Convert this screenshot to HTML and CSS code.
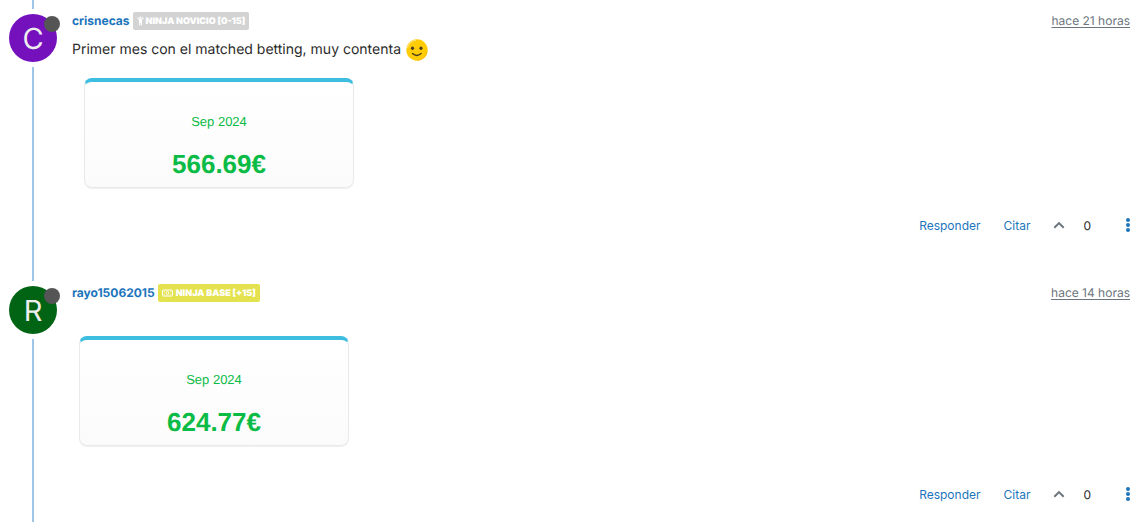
FILE: index.html
```html
<!DOCTYPE html>
<html lang="es">
<head>
<meta charset="utf-8">
<title>Comentarios</title>
<link rel="stylesheet" href="styles.css">
</head>
<body>
<main class="thread">
  <article class="post">
    <div class="rail"><div class="avatar avatar-purple">C<span class="status"></span></div></div>
    <div class="body">
      <header class="head">
        <a class="name" href="#">crisnecas</a>
        <span class="badge badge-gray">
          <svg width="7" height="10" viewBox="0 0 7 10" fill="none" stroke="currentColor" stroke-width="1.1" stroke-linecap="round"><circle cx="3.500" cy="1.600" r="1.100" fill="currentColor" stroke="none"/><path d="M.8 1.800 2.400 3.600h2.200L6.200 1.800M2.600 4v5M4.400 4v5M3.500 4v2.500"/></svg>
          NINJA NOVICIO [0-15]
        </span>
        <a class="time" href="#">hace 21 horas</a>
      </header>
      <p class="text">Primer mes con el matched betting, muy contenta
        <svg class="emoji" width="22" height="22" viewBox="0 0 22 22" role="img" aria-label="sonrisa"><circle cx="11" cy="11" r="10.700" fill="#ffcc05"/><path d="M1.300 9A10 10 0 0 1 10 1.200" fill="none" stroke="#ffe270" stroke-width="1.200"/><path d="M21 13A10.200 10.200 0 0 1 11 21.200" fill="none" stroke="#f6b900" stroke-width="1"/><ellipse cx="6.500" cy="9.300" rx="1.600" ry="1.800" fill="#493c20"/><ellipse cx="15" cy="9.300" rx="1.600" ry="1.800" fill="#493c20"/><path d="M6.500 14.500q4.300 3.800 8.600 0" fill="none" stroke="#493c20" stroke-width="1.400" stroke-linecap="round"/></svg>
      </p>
      <section class="card card-inset">
        <div class="month">Sep 2024</div>
        <div class="amount">566.69€</div>
      </section>
      <footer class="actions">
        <button class="link">Responder</button>
        <button class="link">Citar</button>
        <button class="icon vote" aria-label="Votar"><svg width="12" height="8" viewBox="0 0 12 8" fill="none" stroke="currentColor" stroke-width="2"><path d="M1.300 6.800 6 2.100l4.700 4.700"/></svg></button>
        <span class="count">0</span>
        <button class="icon more" aria-label="Más opciones"><svg width="4" height="14" viewBox="0 0 4 14" fill="currentColor"><circle cx="2" cy="2" r="2"/><circle cx="2" cy="7" r="2"/><circle cx="2" cy="12" r="2"/></svg></button>
      </footer>
    </div>
  </article>
  <article class="post">
    <div class="rail"><div class="avatar avatar-green">R<span class="status"></span></div></div>
    <div class="body">
      <header class="head">
        <a class="name" href="#">rayo15062015</a>
        <span class="badge badge-yellow">
          <svg width="11" height="8" viewBox="0 0 11 8" fill="none" stroke="currentColor"><rect x=".5" y="1" width="10" height="6" rx=".6"/><path d="M2 3.300v-.8h1M8 2.500h1v.8M2 4.700v.8h1M8 5.500h1v-.8" stroke-width=".6"/><ellipse cx="5.500" cy="4" rx="1.300" ry="1.600" stroke-width=".9"/></svg>
          NINJA BASE [+15]
        </span>
        <a class="time" href="#">hace 14 horas</a>
      </header>
      <section class="card card-alone">
        <div class="month">Sep 2024</div>
        <div class="amount">624.77€</div>
      </section>
      <footer class="actions">
        <button class="link">Responder</button>
        <button class="link">Citar</button>
        <button class="icon vote" aria-label="Votar"><svg width="12" height="8" viewBox="0 0 12 8" fill="none" stroke="currentColor" stroke-width="2"><path d="M1.300 6.800 6 2.100l4.700 4.700"/></svg></button>
        <span class="count">0</span>
        <button class="icon more" aria-label="Más opciones"><svg width="4" height="14" viewBox="0 0 4 14" fill="currentColor"><circle cx="2" cy="2" r="2"/><circle cx="2" cy="7" r="2"/><circle cx="2" cy="12" r="2"/></svg></button>
      </footer>
    </div>
  </article>
</main>
</body>
</html>
```
FILE: styles.css
```css
* { box-sizing: border-box; }
body { margin: 0; background: #fff; color: #2b2b2b; font-family: Inter, "Liberation Sans", sans-serif; font-size: 14px; text-rendering: geometricPrecision; }
.thread::before { content: ""; display: block; width: 2px; height: 9px; margin-left: 32px; background: #9dc6e8; }
.post { display: grid; grid-template-columns: 48px 1fr; gap: 15px; padding: 0 15px 0 9px; }
.rail { display: flex; flex-direction: column; padding-top: 5px; }
.rail::after { content: ""; flex: 1; width: 2px; margin: 5px 0 0 23px; background: #9dc6e8; }
.avatar { position: relative; height: 48px; border-radius: 50%; color: #eee; font-size: 29px; line-height: 50px; text-align: center; }
.avatar-purple { background: #7411bd; }
.avatar-green { background: #006414; }
.status { position: absolute; top: 2px; right: -3px; width: 16px; height: 16px; border-radius: 50%; background: #555; }
.body { display: flex; flex-direction: column; padding-bottom: 44px; }
.post:last-child .body { padding-bottom: 16px; }
.head { display: flex; align-items: center; gap: 3px; height: 24px; }
.name, .time { line-height: 16px; padding-bottom: 1px; }
.name { color: #1c75bc; font-size: 12px; font-weight: 700; text-decoration: none; }
.badge { display: flex; align-items: center; gap: 2px; height: 18px; padding: 0 4px; border-radius: 2px; color: #fff; font-size: 9px; font-weight: 900; }
.badge-gray { background: #d3d3d3; }
.badge-yellow { gap: 3px; background: #e4e34f; }
.time { margin-left: auto; color: #6c757d; font-size: 12px; text-decoration: underline; text-underline-offset: 2px; }
.text { display: flex; align-items: center; gap: 5px; margin: 4px 0 0; height: 26px; line-height: 20px; }
.card { width: 270px; height: 110px; padding-top: 32px; border: 1px solid #e9e9e9; border-top: 4px solid #3dbde0; border-radius: 8px; background: linear-gradient(#fff, #fbfbfb); box-shadow: 0 1px 1px #f0f0f0; color: #0abb45; font-family: "Liberation Sans", Arial, sans-serif; text-align: center; }
.card-inset { margin: 15px 0 25px 12px; }
.card-alone { margin: 31px 0 36px 7px; }
.month { font-size: 13px; line-height: 16px; }
.amount { margin-top: 18px; font-size: 26px; line-height: 32px; font-weight: 700; }
.actions { display: flex; align-items: center; justify-content: flex-end; height: 24px; font-size: 12px; }
.link, .icon { display: flex; padding: 0; border: 0; background: none; font: inherit; cursor: pointer; }
.link { margin-right: 23px; color: #1c75bc; }
.vote { margin-right: 18px; color: #6c757d; }
.more { margin-left: 35px; color: #1c75bc; }
```
